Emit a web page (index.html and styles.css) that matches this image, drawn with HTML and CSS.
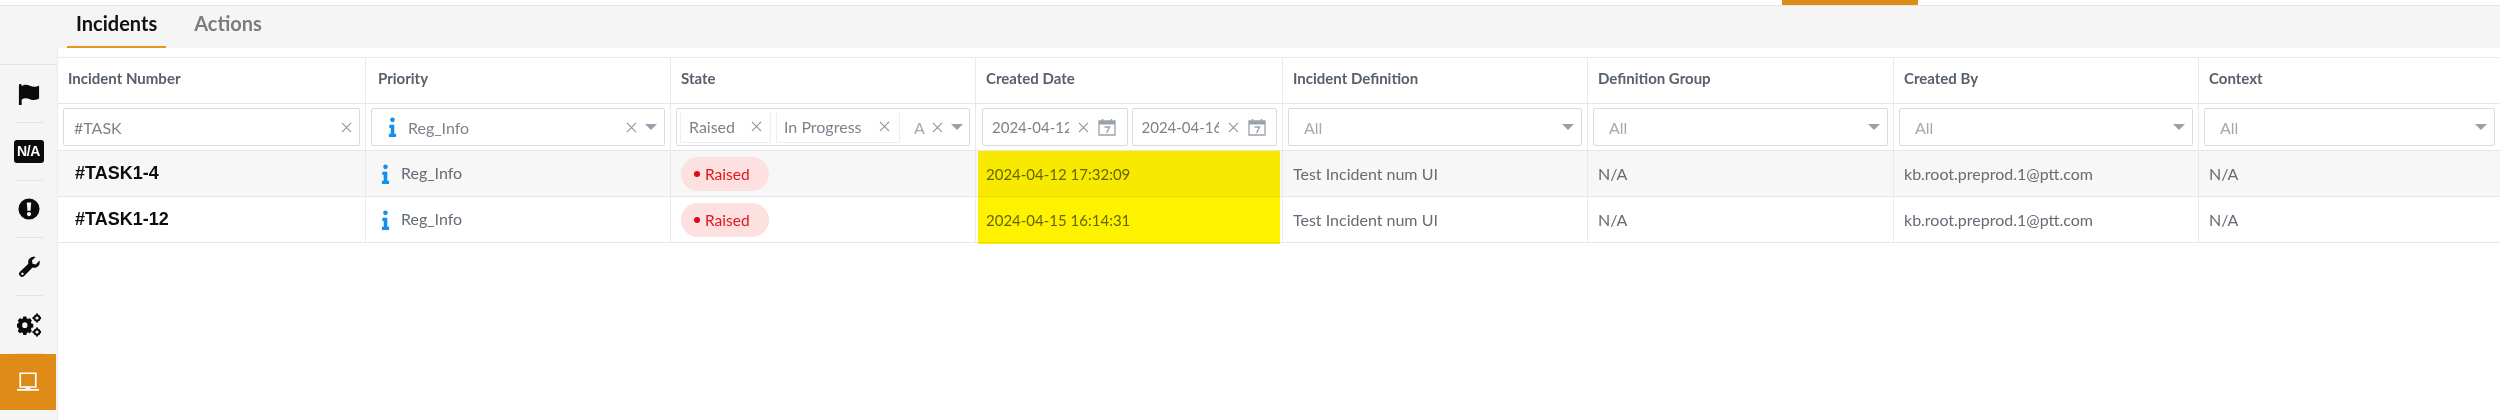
FILE: index.html
```html
<!DOCTYPE html>
<html lang="en">
<head>
<meta charset="utf-8">
<title>Incidents</title>
<link rel="stylesheet" href="styles.css">
</head>
<body>
<div class="topbar"><span class="top-indicator"></span></div>
<nav class="tabs">
  <a class="tab tab-active">Incidents</a>
  <a class="tab">Actions</a>
</nav>
<div class="main">
  <aside class="sidebar">
    <div class="side-head"></div>
    <div class="side-item">
      <svg class="side-icon" viewBox="0 0 24 24"><path d="M1 2.500a1.500 1.500 0 0 1 3 0V3.500c3.500-2.200 6-1.700 9-.5 3 1.200 6.500 1.800 10-.3v14.300c-3.500 2.200-7 1.800-10 .6-3-1.200-6-1.700-9 .3V23a1.500 1.500 0 0 1-3 0z" fill="#0b0b0b"/></svg>
    </div>
    <div class="side-item"><span class="na-badge">N/A</span></div>
    <div class="side-item">
      <svg class="side-icon" viewBox="0 0 24 24"><path fill-rule="evenodd" d="M12 .5a11.500 11.500 0 1 1 0 23 11.500 11.500 0 0 1 0-23zM9.600 5l.7 9h3.400l.7-9zM12 15.200a2.300 2.300 0 1 0 0 4.600 2.300 2.300 0 0 0 0-4.600z" fill="#0b0b0b"/></svg>
    </div>
    <div class="side-item">
      <svg class="side-icon" viewBox="0 0 24 24"><path fill-rule="evenodd" d="M23.500 5c.6 2.500-.1 4.900-1.900 6.400-1.600 1.400-3.700 1.800-5.700 1.200L6.700 21.900a3.300 3.300 0 0 1-4.800-4.500l9.400-8.900c-.6-2-.1-4.200 1.400-5.700C14.300 1.100 16.800.5 19.200 1.100l-4 3.900.7 3.500 3.500.8zM4.200 18.300a1.300 1.300 0 1 0 1.700 1.900 1.300 1.300 0 0 0-1.700-1.900z" fill="#0b0b0b"/></svg>
    </div>
    <div class="side-item">
      <svg class="side-icon side-gears" viewBox="0 0 24 24" fill="#0b0b0b">
        <path fill-rule="evenodd" d="M6.800 6h3.400l.4 2 1.500.6 1.700-1.100 2.400 2.400-1.100 1.700.6 1.500 2 .4v3.400l-2 .4-.6 1.500 1.100 1.700-2.400 2.400-1.700-1.100-1.500.6-.4 2H6.800l-.4-2-1.500-.6-1.700 1.100-2.400-2.400 1.100-1.700-.6-1.500-2-.4v-3.400l2-.4.6-1.500-1.100-1.700 2.400-2.400 1.700 1.100 1.500-.6zM8.500 11.800a2.900 2.900 0 1 0 0 5.800 2.900 2.900 0 0 0 0-5.800z" transform="translate(0 -2.500) scale(.92 1)"/>
        <circle cx="20" cy="5" r="2.600" fill="none" stroke="#0b0b0b" stroke-width="2"/>
        <circle cx="20" cy="19" r="2.600" fill="none" stroke="#0b0b0b" stroke-width="2"/>
        <path d="M19 .5h2V2h-2zM19 8h2v1.500h-2zM15.500 4h1.500v2h-1.500zM23 4h1v2h-1zM19 14.500h2V16h-2zM19 22h2v1.500h-2zM15.500 18h1.500v2h-1.500zM23 18h1v2h-1z"/>
      </svg>
    </div>
    <div class="side-item side-active">
      <svg class="side-icon" viewBox="0 0 24 24"><path d="M3.500 2.500h17v15h-17z" fill="none" stroke="#fff" stroke-width="1.800"/><path d="M0 19.500h9.500v-2h5v2H24V21.500H0z" fill="#fff"/></svg>
    </div>
  </aside>
  <section class="content">
    <div class="highlight"></div>
    <table class="grid">
      <colgroup>
        <col class="c308"><col class="c305"><col class="c305"><col class="c307"><col class="c305"><col class="c306"><col class="c305"><col>
      </colgroup>
      <thead>
        <tr class="head-row">
          <th>Incident Number</th><th class="th-pri">Priority</th><th>State</th><th>Created Date</th><th>Incident Definition</th><th>Definition Group</th><th>Created By</th><th>Context</th>
        </tr>
        <tr class="filter-row">
          <td><div class="field"><span class="field-text">#TASK</span><svg class="x" viewBox="0 0 12 12"><path d="M1 1l10 10M11 1L1 11"/></svg></div></td>
          <td><div class="field"><svg class="info info-f" viewBox="0 0 10 22"><circle cx="5" cy="3" r="2.600"/><path d="M1.500 8.500H7v10h2V22H1v-3.500h2V12H1.500z"/></svg><span class="field-text">Reg_Info</span><svg class="x" viewBox="0 0 12 12"><path d="M1 1l10 10M11 1L1 11"/></svg><span class="caret"></span></div></td>
          <td><div class="field field-tags"><span class="chip">Raised<svg class="x" viewBox="0 0 12 12"><path d="M1 1l10 10M11 1L1 11"/></svg></span><span class="chip chip-2">In Progress<svg class="x" viewBox="0 0 12 12"><path d="M1 1l10 10M11 1L1 11"/></svg></span><span class="chip-cut">A</span><svg class="x" viewBox="0 0 12 12"><path d="M1 1l10 10M11 1L1 11"/></svg><span class="caret"></span></div></td>
          <td><div class="dates">
            <div class="field field-date"><span class="date-text">2024-04-12</span><svg class="x" viewBox="0 0 12 12"><path d="M1 1l10 10M11 1L1 11"/></svg><svg class="cal" viewBox="0 0 18 18"><path d="M1 3h16v14H1z" fill="none" stroke-width="1.300"/><path d="M1 3h16v3.500H1z" fill="#9aa3ad" stroke="none"/><path d="M4.500 1v3M13.500 1v3" stroke-width="1.500"/><path d="M6.500 9h5l-3 6" fill="none" stroke-width="1.400"/></svg></div>
            <div class="field field-date"><span class="date-text">2024-04-16</span><svg class="x" viewBox="0 0 12 12"><path d="M1 1l10 10M11 1L1 11"/></svg><svg class="cal" viewBox="0 0 18 18"><path d="M1 3h16v14H1z" fill="none" stroke-width="1.300"/><path d="M1 3h16v3.500H1z" fill="#9aa3ad" stroke="none"/><path d="M4.500 1v3M13.500 1v3" stroke-width="1.500"/><path d="M6.500 9h5l-3 6" fill="none" stroke-width="1.400"/></svg></div>
          </div></td>
          <td><div class="field"><span class="field-all">All</span><span class="caret"></span></div></td>
          <td><div class="field"><span class="field-all">All</span><span class="caret"></span></div></td>
          <td><div class="field"><span class="field-all">All</span><span class="caret"></span></div></td>
          <td><div class="field"><span class="field-all">All</span><span class="caret"></span></div></td>
        </tr>
      </thead>
      <tbody>
        <tr class="row row-alt">
          <td class="num">#TASK1-4</td>
          <td class="pri"><svg class="info" viewBox="0 0 10 22"><circle cx="5" cy="3" r="2.600"/><path d="M1.500 8.500H7v10h2V22H1v-3.500h2V12H1.500z"/></svg>Reg_Info</td>
          <td class="state"><span class="badge"><i class="dot"></i>Raised</span></td>
          <td class="date-cell">2024-04-12 17:32:09</td>
          <td>Test Incident num UI</td><td>N/A</td><td>kb.root.preprod.1@ptt.com</td><td>N/A</td>
        </tr>
        <tr class="row">
          <td class="num">#TASK1-12</td>
          <td class="pri"><svg class="info" viewBox="0 0 10 22"><circle cx="5" cy="3" r="2.600"/><path d="M1.500 8.500H7v10h2V22H1v-3.500h2V12H1.500z"/></svg>Reg_Info</td>
          <td class="state"><span class="badge"><i class="dot"></i>Raised</span></td>
          <td class="date-cell">2024-04-15 16:14:31</td>
          <td>Test Incident num UI</td><td>N/A</td><td>kb.root.preprod.1@ptt.com</td><td>N/A</td>
        </tr>
      </tbody>
    </table>
  </section>
</div>
</body>
</html>
```

FILE: styles.css
```css
* { box-sizing: border-box; }
html, body { margin: 0; height: 100%; }
body {
  font-family: Lato, "Open Sans", sans-serif;
  font-size: 16px;
  color: #646c75;
  background: #fff;
  overflow: hidden;
  display: flex;
  flex-direction: column;
}
.topbar {
  height: 6px;
  border-bottom: 1px solid #e6e6e6;
  padding-left: 1782px;
  flex: none;
}
.top-indicator { display: block; width: 136px; height: 5px; background: #df8b17; }
.tabs {
  height: 42px;
  background: #f5f5f5;
  padding-left: 67px;
  display: flex;
  gap: 19px;
  flex: none;
}
.tab {
  font-weight: 700;
  font-size: 20px;
  color: #7c7c7c;
  padding: 5px 9px 0;
  height: 42px;
  line-height: 24px;
}
.tab-active { color: #111; border-bottom: 2px solid #e8951d; }
.main { flex: 1; display: flex; min-height: 0; }
.sidebar {
  width: 58px;
  flex: none;
  background: #f5f5f5;
  border-right: 1px solid #ececec;
  display: flex;
  flex-direction: column;
  align-items: center;
}
.side-head { height: 17px; width: 100%; border-bottom: 1px solid #e4e4e4; flex: none; }
.side-item {
  height: 57.75px;
  width: 100%;
  flex: none;
  display: flex;
  align-items: center;
  justify-content: center;
  position: relative;
}
.side-item::after {
  content: "";
  position: absolute;
  left: 15px;
  bottom: 0;
  width: 28px;
  height: 1px;
  background: #e2e2e2;
}
.side-item.side-active { width: 56px; height: 56px; background: #df8b17; margin-left: -1px; }
.side-active::after { display: none; }
.side-icon { width: 22px; height: 22px; display: block; }
.side-gears { width: 24px; height: 24px; }
.na-badge {
  width: 30px;
  height: 23px;
  border-radius: 3px;
  background: #0b0b0b;
  color: #fff;
  font: 700 14px/23px "Liberation Sans", sans-serif;
  text-align: center;
  letter-spacing: -0.4px;
}
.content { flex: 1; position: relative; padding-top: 9px; min-width: 0; }
.highlight {
  position: absolute;
  left: 920px;
  top: 103px;
  width: 302px;
  height: 93px;
  background: #fff200;
  mix-blend-mode: multiply;
  z-index: 2;
}
.grid {
  width: 100%;
  table-layout: fixed;
  border-collapse: separate;
  border-spacing: 0;
  border-top: 1px solid #e9e9e9;
}
.c308 { width: 308px; }
.c305 { width: 305px; }
.c306 { width: 306px; }
.c307 { width: 307px; }
.grid th, .grid td {
  border-right: 1px solid #e9e9e9;
  border-bottom: 1px solid #e6e6e6;
  padding: 0 0 0 10px;
  text-align: left;
  white-space: nowrap;
  overflow: hidden;
}
.grid th:last-child, .grid td:last-child { border-right: 0; }
.head-row th {
  height: 46px;
  padding-bottom: 5px;
  font-weight: 700;
  font-size: 15px;
  color: #57606b;
}
.grid .th-pri { padding-left: 12px; }
.filter-row td { height: 47px; padding: 4px 5px 4px 5px; }
.field {
  height: 38px;
  border: 1px solid #d9dcdf;
  border-radius: 2px;
  background: #fff;
  display: flex;
  align-items: center;
  padding: 0 7px 0 10px;
  font-size: 16px;
  color: #7b838c;
  min-width: 0;
}
.field-text { flex: 1; }
.field-all { flex: 1; color: #a3a9af; padding-left: 5px; }
.x {
  width: 11px;
  height: 11px;
  flex: none;
  stroke: #8d959d;
  stroke-width: 1.200;
  fill: none;
}
.caret {
  flex: none;
  margin-left: 8px;
  width: 0;
  height: 0;
  border-left: 6px solid transparent;
  border-right: 6px solid transparent;
  border-top: 6px solid #98a1ab;
}
.info { width: 9px; height: 20px; fill: #1590ea; margin-right: 11px; flex: none; vertical-align: middle; }
.info-f { margin: 0 11px 0 6px; }
.field-tags { padding: 3px 6px 3px 3px; }
.chip {
  height: 31px;
  width: 91px;
  flex: none;
  display: flex;
  align-items: center;
  justify-content: space-between;
  padding: 0 8px 0 8px;
  border: 1px solid #eeeeee;
  border-top: 0;
}
.chip-2 { width: 124px; margin-left: 5px; padding: 0 9px 0 7px; }
.chip-cut { flex: 1; padding-left: 14px; color: #a3a9af; }
.dates { display: flex; gap: 4px; margin-left: 1px; }
.field-date { width: 146px; padding: 0 6px 0 9px; font-size: 15px; }
.date-text { width: 77px; overflow: hidden; flex: none; }
.field-date .x { margin-left: 9px; }
.cal {
  width: 18px;
  height: 18px;
  margin-left: 9px;
  flex: none;
  stroke: #9aa3ad;
}
.row td { height: 46px; font-size: 16px; color: #646c75; }
.row-alt td { background: #f7f7f7; }
.grid td.num {
  font: 700 18px "Liberation Sans", sans-serif;
  color: #0d0d0d;
  padding-left: 17px;
}
.grid td.pri { padding-left: 15px; }
.grid td.date-cell { font-size: 15px; }
.badge {
  display: inline-flex;
  align-items: center;
  height: 34px;
  width: 88px;
  padding-left: 13px;
  border-radius: 17px;
  background: #fde0e0;
  color: #e2141c;
  font-size: 15.500px;
}
.dot { width: 6px; height: 6px; border-radius: 50%; background: #dd0a12; margin-right: 5px; }
```
